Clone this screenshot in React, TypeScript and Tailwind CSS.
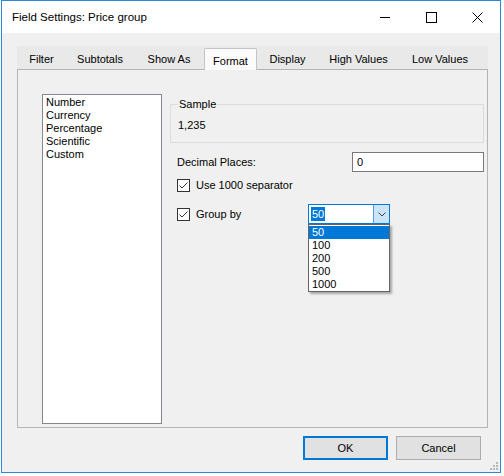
import { useState } from "react"

const tabs = [
    { name: "Filter", w: "w-[49px]" },
    { name: "Subtotals", w: "w-[68px]" },
    { name: "Show As", w: "w-[70px]" },
    { name: "Format", w: "w-[53px]" },
    { name: "Display", w: "w-[61px]" },
    { name: "High Values", w: "w-[81px]" },
    { name: "Low Values", w: "w-[82px]" },
]

const formats = ["Number", "Currency", "Percentage", "Scientific", "Custom"]
const groupSizes = ["50", "100", "200", "500", "1000"]

function CheckBox({ checked }: { checked: boolean }) {
    return (
        <div className="w-[13px] h-[13px] border border-[#333333] bg-white flex items-center justify-center shrink-0">
            {checked && (
                <svg width="11" height="11" viewBox="0 0 11 11">
                    <polyline points="1.5,5.5 4,8 9.5,2.5" fill="none" stroke="#333333" strokeWidth="1" />
                </svg>
            )}
        </div>
    )
}

export default function App() {
    const [activeTab] = useState<string>("Format")
    const [groupBy] = useState<string>("50")

    return (
        <div className="w-[504px] h-[476px] bg-white text-[11px] text-black font-['Liberation_Sans',Arial,sans-serif]">
            <div className="ml-px w-[500px] h-[473px] border border-[#2b87d8] flex flex-col bg-[#f0f0f0]">
                {/* title bar */}
                <div className="h-[32px] bg-white flex items-center shrink-0">
                    <span className="pl-[10px] text-[11.5px] flex-1 pt-[2px]">Field Settings: Price group</span>
                    <div className="w-[46px] h-full flex items-center justify-center">
                        <div className="w-[10px] h-px bg-black" />
                    </div>
                    <div className="w-[46px] h-full flex items-center justify-center">
                        <div className="w-[11px] h-[11px] border border-black" />
                    </div>
                    <div className="w-[46px] h-full flex items-center justify-center">
                        <svg width="11" height="11" viewBox="0 0 11 11">
                            <path d="M0.5 0.5 L10.5 10.5 M10.5 0.5 L0.5 10.5" stroke="black" strokeWidth="1" />
                        </svg>
                    </div>
                </div>

                {/* body */}
                <div className="flex-1 flex flex-col pl-[15px] pt-[13px] relative">
                    {/* tabs */}
                    <div className="w-[471px] h-[23px] bg-[#e9e9e9] flex items-end relative z-10">
                        {tabs.map((t) =>
                            t.name === activeTab ? (
                                <div key={t.name} className={`${t.w} h-[22px] -mb-px bg-[#fbfbfb] border border-b-0 border-[#c4c4c4] rounded-t-[2px] flex items-center justify-center pt-[3px]`}>
                                    {t.name}
                                </div>
                            ) : (
                                <div key={t.name} className={`${t.w} h-[23px] flex items-center justify-center pt-[3px]`}>
                                    {t.name}
                                </div>
                            )
                        )}
                    </div>

                    {/* tab panel */}
                    <div className="w-[471px] h-[359px] border border-[#b4b4b4] bg-[#f0f0f0] flex items-start pl-[24px] pt-[24px]">
                        <div className="w-[120px] h-[330px] bg-white border border-[#828790] pt-[1px] pl-[3px] shrink-0">
                            {formats.map((f) => (
                                <div key={f} className="h-[13px] leading-[13px]">{f}</div>
                            ))}
                        </div>

                        <div className="ml-[8px] mt-[10px] w-[314px] flex flex-col">
                            <div className="relative h-[39px] border border-[#dcdcdc] pl-[7px] pt-[14px]">
                                <span className="absolute -top-[7px] left-[7px] px-[1px] bg-[#f0f0f0] leading-[13px]">Sample</span>
                                <div className="leading-[13px]">1,235</div>
                            </div>

                            <div className="mt-[9px] h-[20px] flex items-center pl-[7px]">
                                <span className="w-[175px]">Decimal Places:</span>
                                <div className="w-[132px] h-[20px] bg-white border border-[#7a7a7a] flex items-center pl-[4px]">0</div>
                            </div>

                            <div className="mt-[3px] h-[20px] flex items-center pl-[7px] gap-[6px]">
                                <CheckBox checked />
                                <span>Use 1000 separator</span>
                            </div>

                            <div className="mt-[9px] h-[20px] flex items-center pl-[7px]">
                                <div className="w-[131px] flex items-center gap-[6px]">
                                    <CheckBox checked />
                                    <span>Group by</span>
                                </div>
                                <div className="relative w-[82px] h-[20px] bg-white border border-[#0078d7] flex items-center">
                                    <div className="flex-1 pl-[2px] flex items-center">
                                        <span className="bg-[#0078d7] text-white leading-[14px] px-px">{groupBy}</span>
                                    </div>
                                    <div className="w-[16px] h-full bg-[#cce4f7] border-l border-[#569de5] flex items-center justify-center">
                                        <svg width="8" height="5" viewBox="0 0 8 5">
                                            <polyline points="0.5,0.5 4,4 7.5,0.5" fill="none" stroke="#404040" strokeWidth="1" />
                                        </svg>
                                    </div>

                                    {/* open dropdown */}
                                    <div className="absolute -left-px top-[19px] w-[82px] bg-white border border-[#646464] shadow-[2px_2px_2px_rgba(0,0,0,0.3)] z-20 pt-px">
                                        {groupSizes.map((g) => (
                                            <div
                                                key={g}
                                                className={g === groupBy ? "h-[13px] leading-[13px] pl-[3px] bg-[#0078d7] text-white" : "h-[13px] leading-[13px] pl-[3px]"}
                                            >
                                                {g}
                                            </div>
                                        ))}
                                    </div>
                                </div>
                            </div>
                        </div>
                    </div>

                    {/* buttons */}
                    <div className="mt-[8px] flex justify-end gap-[8px] pr-[19px]">
                        <button className="w-[85px] h-[24px] bg-[#e1e1e1] border-2 border-[#0078d7]">OK</button>
                        <button className="w-[85px] h-[24px] bg-[#e1e1e1] border border-[#adadad]">Cancel</button>
                    </div>

                    {/* resize grip */}
                    <svg className="absolute right-[2px] bottom-[2px]" width="8" height="8" viewBox="0 0 8 8">
                        <rect x="6" y="0" width="2" height="2" fill="#b8b8b8" />
                        <rect x="3" y="3" width="2" height="2" fill="#b8b8b8" />
                        <rect x="6" y="3" width="2" height="2" fill="#b8b8b8" />
                        <rect x="0" y="6" width="2" height="2" fill="#b8b8b8" />
                        <rect x="3" y="6" width="2" height="2" fill="#b8b8b8" />
                        <rect x="6" y="6" width="2" height="2" fill="#b8b8b8" />
                    </svg>
                </div>
            </div>
        </div>
    )
}
